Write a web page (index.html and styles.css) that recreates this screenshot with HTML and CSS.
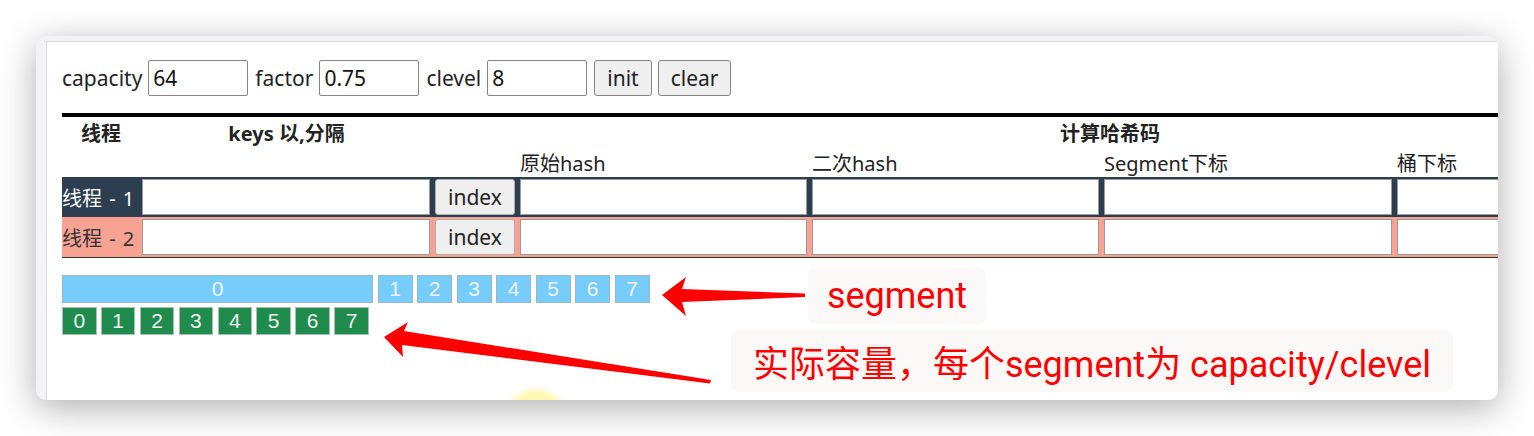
FILE: index.html
```html
<!DOCTYPE html>
<html lang="zh">
<head>
<meta charset="utf-8">
<title>ConcurrentHashMap</title>
<link rel="stylesheet" href="styles.css">
</head>
<body>
<div class="desk">
  <div class="window">
    <div class="page">
      <div class="controls">
        <label class="lbl">capacity</label><input class="num" value="64">
        <label class="lbl">factor</label><input class="num" value="0.75">
        <label class="lbl">clevel</label><input class="num" value="8">
        <button class="btn">init</button><button class="btn">clear</button>
      </div>
      <table class="grid">
        <colgroup>
          <col class="c-name"><col class="c-keys"><col class="c-idx">
          <col class="c-h"><col class="c-h"><col class="c-h2"><col class="c-last">
        </colgroup>
        <thead>
          <tr class="h1"><th>线程</th><th>keys 以,分隔</th><th></th><th colspan="4">计算哈希码</th></tr>
          <tr class="h2"><th></th><th></th><th></th><th>原始hash</th><th>二次hash</th><th>Segment下标</th><th>桶下标</th></tr>
        </thead>
        <tbody>
          <tr class="t1">
            <td class="name">线程 - 1</td>
            <td><input class="cell"></td>
            <td><button class="idx">index</button></td>
            <td><input class="cell"></td><td><input class="cell"></td><td><input class="cell"></td><td><input class="cell"></td>
          </tr>
          <tr class="t2">
            <td class="name">线程 - 2</td>
            <td><input class="cell"></td>
            <td><button class="idx">index</button></td>
            <td><input class="cell"></td><td><input class="cell"></td><td><input class="cell"></td><td><input class="cell"></td>
          </tr>
        </tbody>
      </table>
      <div class="segs">
        <div class="seg wide">0</div><div class="seg">1</div><div class="seg">2</div><div class="seg">3</div>
        <div class="seg">4</div><div class="seg">5</div><div class="seg">6</div><div class="seg">7</div>
      </div>
      <div class="buckets">
        <div class="bk">0</div><div class="bk">1</div><div class="bk">2</div><div class="bk">3</div>
        <div class="bk">4</div><div class="bk">5</div><div class="bk">6</div><div class="bk">7</div>
      </div>
    </div>
    <div class="glow"></div>
    <svg class="arrows" viewBox="36 36 1462 364" width="1462" height="364">
      <polygon points="662,295 686,277 682,289 805,293.5 805,297 682,302 686,316" fill="#ff0000"/>
      <polygon points="384,337 408,322 404,331 711,380 710,383.5 402,345 403,357" fill="#ff0000"/>
    </svg>
    <div class="note note-seg">segment</div>
    <div class="note note-cap">实际容量，每个segment为 capacity/clevel</div>
  </div>
</div>
</body>
</html>
```
FILE: styles.css
```css
* { box-sizing: border-box; }

body {
  margin: 0;
  background: #fff;
  font-family: "Noto Sans", "Noto Sans CJK SC", sans-serif;
}

.desk {
  height: 436px;
  padding: 36px 0 0 36px;
  overflow: hidden;
}

.window {
  position: relative;
  width: 1462px;
  height: 364px;
  border-radius: 10px;
  background: #f3f3f5;
  box-shadow: 0 8px 36px rgba(0, 0, 0, 0.32);
  padding: 5px 0 0 10px;
  overflow: hidden;
}

.page {
  height: 100%;
  background: #fff;
  border-top: 1px solid #dcdcdc;
  border-left: 1px solid #dcdcdc;
  padding: 18px 0 0 15px;
  overflow: hidden;
  font-size: 20px;
  color: #222;
}

.controls {
  display: flex;
  align-items: center;
  height: 36px;
  font-size: 21px;
}

.lbl { margin-right: 6px; }

.num {
  width: 100px;
  height: 36px;
  border: 1px solid #858585;
  border-radius: 2px;
  padding: 0 4px;
  font: inherit;
  color: #111;
  margin-right: 7px;
}

.btn {
  height: 36px;
  padding: 0 12px;
  border: 1px solid #858585;
  border-radius: 3px;
  background: #efefef;
  font: inherit;
  color: #222;
  margin-right: 6px;
}

.grid {
  margin-top: 17px;
  border-collapse: collapse;
  table-layout: fixed;
  width: 1640px;
  border-top: 4px solid #000;
  border-bottom: 1px solid #333;
}

.c-name { width: 78px; }
.c-keys { width: 293px; }
.c-idx { width: 85px; }
.c-h { width: 292px; }
.c-h2 { width: 293px; }
.c-last { width: 307px; }

.grid th { padding: 0; white-space: nowrap; }

.h1 th {
  height: 32px;
  font-weight: bold;
  text-align: center;
}

.h2 th {
  height: 30px;
  font-weight: normal;
  text-align: left;
  padding-left: 2px;
}

.grid td {
  height: 40px;
  padding: 2px 3px 2px 2px;
}

.grid td.name {
  padding: 0;
  white-space: nowrap;
  word-spacing: 2px;
}

.t1 { background: #2c3e50; color: #fff; }
.t2 { background: #f8a294; color: #333; }

.cell {
  display: block;
  width: 100%;
  height: 36px;
  border: 1px solid #9a9a9a;
  background: #fff;
}

.idx {
  display: block;
  width: 100%;
  height: 36px;
  border: 1px solid #b0b0b0;
  border-radius: 3px;
  background: #efefef;
  font: inherit;
  font-size: 21px;
  color: #222;
}

.segs, .buckets {
  display: flex;
  gap: 4.5px;
  height: 28px;
}

.segs { margin-top: 17px; }
.buckets { margin-top: 4.4px; gap: 4.4px; }

.seg, .bk {
  display: flex;
  align-items: center;
  justify-content: center;
  font-family: "Liberation Sans", sans-serif;
  font-size: 21px;
  color: #f2f2f2;
}

.seg {
  width: 35px;
  background: #76cdfc;
  border: 1px solid #9db6c6;
}

.seg.wide { width: 311px; }

.bk {
  width: 34.5px;
  background: #1f8b4c;
  border: 1px solid #a9bfb0;
}

.glow {
  position: absolute;
  left: 466px;
  top: 350px;
  width: 68px;
  height: 68px;
  border-radius: 50%;
  background: radial-gradient(circle, rgba(255, 247, 165, 0.85) 0 55%, rgba(255, 247, 165, 0) 72%);
}

.arrows {
  position: absolute;
  left: 0;
  top: 0;
  pointer-events: none;
}

.note {
  position: absolute;
  display: flex;
  align-items: center;
  justify-content: center;
  background: #faf9f7;
  border-radius: 8px;
  color: #ff0000;
  font-family: Roboto, "Noto Sans CJK SC", sans-serif;
  white-space: nowrap;
}

.note-seg {
  left: 772px;
  top: 232px;
  width: 178px;
  height: 56px;
  font-size: 36px;
}

.note-cap {
  left: 695px;
  top: 294px;
  width: 722px;
  height: 62px;
  font-size: 36px;
}
```
